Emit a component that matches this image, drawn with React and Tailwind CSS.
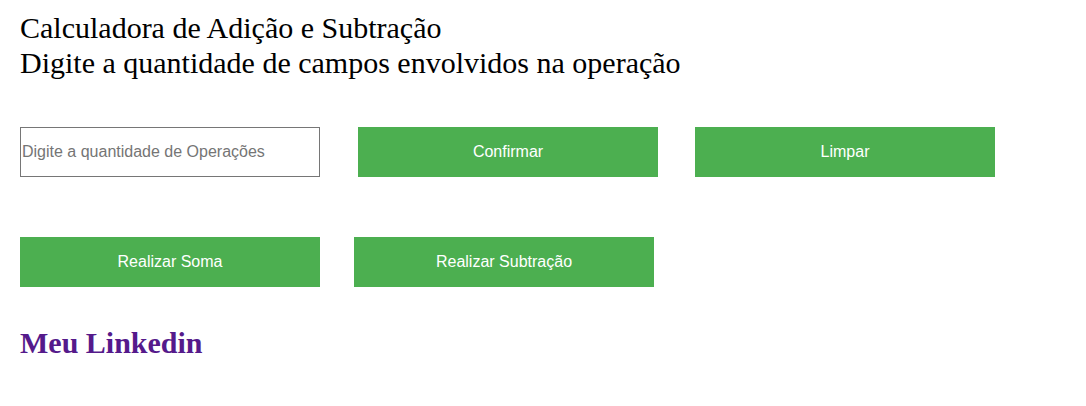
import React from 'react';

const btn = "w-[300px] h-[50px] bg-[#4caf50] text-white text-[16px] font-['Liberation_Sans',Arial,sans-serif]";

export default function App() {
  const [qtd, setQtd] = React.useState('');

  return (
    <div className="bg-white min-h-[406px] px-[20px] pt-[10px] font-['Liberation_Serif','Times_New_Roman',serif] text-black">
      <p className="text-[30px] leading-[35px]">Calculadora de Adição e Subtração</p>
      <p className="text-[30px] leading-[35px]">Digite a quantidade de campos envolvidos na operação</p>

      <div className="flex items-center mt-[47px]">
        <input
          type="number"
          value={qtd}
          onChange={(e) => setQtd(e.target.value)}
          placeholder="Digite a quantidade de Operações"
          className="w-[300px] h-[50px] border border-[#767676] px-[1px] text-[16px] font-['Liberation_Sans',Arial,sans-serif] placeholder:text-[#757575] outline-none"
        />
        <button className={`${btn} ml-[38px]`}>Confirmar</button>
        <button className={`${btn} ml-[37px]`}>Limpar</button>
      </div>

      <div className="flex items-center mt-[60px]">
        <button className={btn}>Realizar Soma</button>
        <button className={`${btn} ml-[34px]`}>Realizar Subtração</button>
      </div>

      <a href="#" className="block mt-[38px] text-[30px] font-bold text-[#551a8b] leading-[35px] w-fit">Meu Linkedin</a>
    </div>
  );
}
